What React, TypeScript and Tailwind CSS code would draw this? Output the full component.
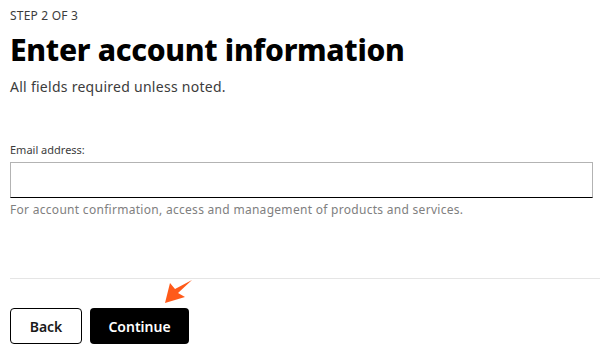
import React from "react";

export default function App() {
  return (
    <div className="relative w-[600px] h-[351px] bg-white overflow-hidden font-['Noto_Sans']">
      <div className="pl-[10px] pt-[8px]">
        <div className="text-[12px] leading-[16px] text-[#3c3c3c] tracking-[0.2px]">STEP 2 OF 3</div>
        <h1 className="mt-[8px] text-[30px] leading-[36px] font-extrabold text-black tracking-[-0.3px]">Enter account information</h1>
        <p className="mt-[9px] text-[14px] leading-[20px] text-[#3c3c3c] tracking-[0.27px]">All fields required unless noted.</p>
        <label className="block mt-[45px] text-[11px] leading-[16px] text-[#3c3c3c]">Email address:</label>
        <div className="mt-[4px] mr-[7px] h-[36px] border border-[#b3b3b3] border-b-black bg-white"></div>
        <p className="mt-[4px] text-[12px] leading-[16px] text-[#808080] tracking-[0.29px]">For account confirmation, access and management of products and services.</p>
        <div className="mt-[60px] h-px bg-[#e5e5e5]"></div>
        <div className="mt-[29px] flex gap-[8px]">
          <button className="w-[72px] h-[36px] rounded-[4px] border border-black bg-white text-[14px] font-semibold text-[#1a1a1a]">Back</button>
          <button className="w-[99px] h-[36px] rounded-[4px] bg-black text-[14px] font-semibold text-white">Continue</button>
        </div>
      </div>
      <svg className="absolute left-[160px] top-[276px]" width="40" height="32" viewBox="0 0 40 32">
        <path d="M5 27 L10 7 L15 13 L32 4 L18 17 L25 21 Z" fill="#ff5a1a" />
      </svg>
    </div>
  );
}
